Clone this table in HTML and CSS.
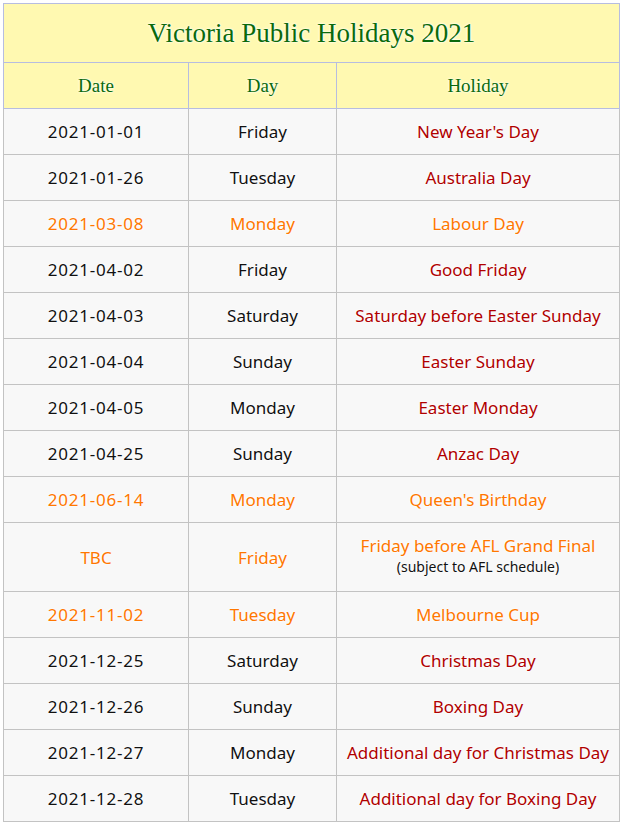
FILE: index.html
```html
<!DOCTYPE html>
<html>
<head>
<meta charset="utf-8">
<link rel="stylesheet" href="styles.css">
</head>
<body>
<table class="hol">
  <colgroup><col class="c-date"><col class="c-day"><col class="c-name"></colgroup>
  <thead>
    <tr><th colspan="3" class="title">Victoria Public Holidays 2021</th></tr>
    <tr class="head"><th>Date</th><th>Day</th><th>Holiday</th></tr>
  </thead>
  <tbody>
    <tr><td class="date">2021-01-01</td><td>Friday</td><td class="name">New Year's Day</td></tr>
    <tr><td class="date">2021-01-26</td><td>Tuesday</td><td class="name">Australia Day</td></tr>
    <tr class="vic"><td class="date">2021-03-08</td><td>Monday</td><td class="name">Labour Day</td></tr>
    <tr><td class="date">2021-04-02</td><td>Friday</td><td class="name">Good Friday</td></tr>
    <tr><td class="date">2021-04-03</td><td>Saturday</td><td class="name">Saturday before Easter Sunday</td></tr>
    <tr><td class="date">2021-04-04</td><td>Sunday</td><td class="name">Easter Sunday</td></tr>
    <tr><td class="date">2021-04-05</td><td>Monday</td><td class="name">Easter Monday</td></tr>
    <tr><td class="date">2021-04-25</td><td>Sunday</td><td class="name">Anzac Day</td></tr>
    <tr class="vic"><td class="date">2021-06-14</td><td>Monday</td><td class="name">Queen's Birthday</td></tr>
    <tr class="vic tall"><td>TBC</td><td>Friday</td><td class="name">Friday before AFL Grand Final<span class="note">(subject to AFL schedule)</span></td></tr>
    <tr class="vic"><td class="date">2021-11-02</td><td>Tuesday</td><td class="name">Melbourne Cup</td></tr>
    <tr><td class="date">2021-12-25</td><td>Saturday</td><td class="name">Christmas Day</td></tr>
    <tr><td class="date">2021-12-26</td><td>Sunday</td><td class="name">Boxing Day</td></tr>
    <tr><td class="date">2021-12-27</td><td>Monday</td><td class="name">Additional day for Christmas Day</td></tr>
    <tr><td class="date">2021-12-28</td><td>Tuesday</td><td class="name">Additional day for Boxing Day</td></tr>
  </tbody>
</table>
</body>
</html>
```
FILE: styles.css
```css
html, body {
  margin: 0;
  padding: 0;
  background: #ffffff;
}
body {
  padding: 3px 0 0 3px;
}
.hol {
  border-collapse: collapse;
  width: 617px;
  table-layout: fixed;
  font-family: "Noto Sans", sans-serif;
}
.c-date { width: 185px; }
.c-day { width: 148px; }
.c-name { width: auto; }
.hol th {
  background: #fff9b1;
  color: #0b6a0b;
  font-family: "Liberation Serif", serif;
  font-weight: normal;
  border: 1px solid #b7bde0;
  text-shadow: 0 0 3px #ffffff, 0 0 2px #ffffff;
  text-align: center;
  padding: 0;
}
.hol th.title {
  height: 58px;
  font-size: 27px;
}
.hol tr.head th {
  height: 45px;
  font-size: 19px;
}
.hol td {
  background: #f8f8f8;
  border: 1px solid #c3c3c3;
  text-align: center;
  height: 45px;
  padding: 0;
  font-size: 17px;
  color: #111111;
  white-space: nowrap;
  text-shadow: 0 0 3px #ffffff, 0 0 2px #ffffff;
}
.hol td.date {
  letter-spacing: 0.8px;
}
.hol td.name {
  color: #b00000;
}
.hol tr.vic td,
.hol tr.vic td.name {
  color: #ff7700;
}
.hol tr.tall td {
  height: 68px;
}
.note {
  display: block;
  font-size: 14px;
  line-height: 18px;
  color: #111111;
  margin-top: 1px;
  margin-bottom: 4px;
}
```
